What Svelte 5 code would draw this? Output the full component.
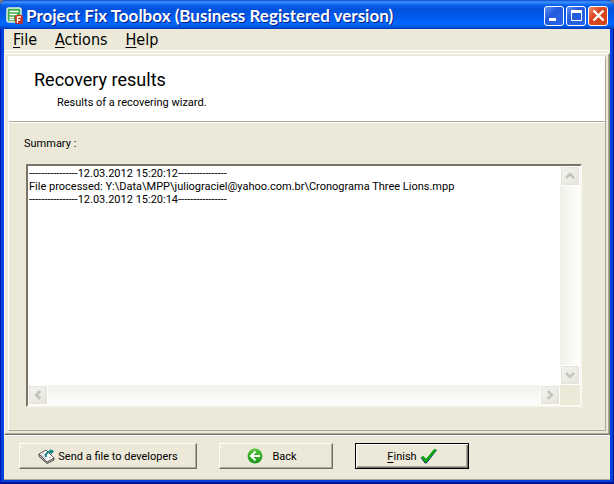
<script>
  const menus = ['File', 'Actions', 'Help'];
  const summary = [
    '----------------12.03.2012 15:20:12----------------',
    'File processed: Y:\\Data\\MPP\\juliograciel@yahoo.com.br\\Cronograma Three Lions.mpp',
    '----------------12.03.2012 15:20:14----------------'
  ].join('\n');
</script>

{#snippet arrow(label, turn)}
  <button class="arrow" type="button" aria-label={label} disabled>
    <svg width="10" height="10" viewBox="0 0 10 10" aria-hidden="true">
      <path d="M1 7.2 L5 3.2 L9 7.2" transform="rotate({turn} 5 5)" fill="none" stroke="#c4c4bd" stroke-width="2.6" />
    </svg>
  </button>
{/snippet}

<div class="desktop">
  <div class="window">
    <header class="titlebar">
      <svg class="app-icon" width="17" height="17" viewBox="0 0 17 17" aria-hidden="true">
        <rect x="1" y="1" width="14" height="14" rx="2" fill="#43ad4c" stroke="#e2f4df" stroke-width="1.5" />
        <path d="M3.5 4.5H12.5M3.5 7.5H11M3.5 10.5H8M3.5 12.5H8" stroke="#fff" stroke-width="1.6" />
        <rect x="9" y="8" width="8" height="9" rx="2" fill="#c52d20" />
        <path d="M11.5 16V10H15M11.5 13H14.5" fill="none" stroke="#fff" stroke-width="1.3" />
      </svg>
      <h1>Project Fix Toolbox (Business Registered version)</h1>
      <div class="controls">
        <button type="button" aria-label="Minimize">
          <svg width="17" height="17" viewBox="0 0 17 17" aria-hidden="true"><path d="M3 12.5H10" stroke="#fff" stroke-width="3" /></svg>
        </button>
        <button type="button" aria-label="Maximize">
          <svg width="17" height="17" viewBox="0 0 17 17" aria-hidden="true"><path d="M3 4.5H14" stroke="#fff" stroke-width="3" /><path d="M3.5 4V13.5H13.5V4" fill="none" stroke="#fff" /></svg>
        </button>
        <button class="close" type="button" aria-label="Close">
          <svg width="17" height="17" viewBox="0 0 17 17" aria-hidden="true"><path d="M3.5 3.5L13.5 13.5M13.5 3.5L3.5 13.5" stroke="#fff" stroke-width="2.4" /></svg>
        </button>
      </div>
    </header>

    <div class="body">
      <nav>
        {#each menus as m}
          <button type="button"><u>{m[0]}</u>{m.slice(1)}</button>
        {/each}
      </nav>

      <main>
        <div class="page">
          <div class="banner">
            <h2>Recovery results</h2>
            <p>Results of a recovering wizard.</p>
          </div>
          <div class="content">
            <label for="summary">Summary :</label>
            <div class="memo">
              <textarea id="summary" readonly wrap="off" value={summary}></textarea>
              <div class="bar vertical">
                {@render arrow('Scroll up', 0)}
                {@render arrow('Scroll down', 180)}
              </div>
              <div class="bar horizontal">
                {@render arrow('Scroll left', -90)}
                {@render arrow('Scroll right', 90)}
              </div>
            </div>
          </div>
        </div>
      </main>

      <footer>
        <button class="send" type="button">
          <svg width="17" height="15" viewBox="0 0 17 15" aria-hidden="true">
            <path d="M1 5L8 1L16 9L9 14Z" fill="#fff" stroke="#555" />
            <path d="M1 5V7.5L9 14.5L16 11V9L9 13Z" fill="#bbb" stroke="#333" stroke-width=".8" />
            <path d="M3 5.5L8 10M5 4L9 8.5M11 9L13 8" stroke="#aaa" />
            <path d="M8 8C7 5 9 3 13 2.5" fill="none" stroke="#087f80" stroke-width="1.8" />
            <path d="M11.5 0L16 2L13 5.5Z" fill="#087f80" />
          </svg>
          <span>Send a file to developers</span>
        </button>
        <button class="back" type="button">
          <svg width="16" height="16" viewBox="0 0 16 16" aria-hidden="true">
            <defs><linearGradient id="green" x1="0" y1="0" x2="0" y2="1"><stop offset="0" stop-color="#58c63f" /><stop offset="1" stop-color="#159615" /></linearGradient></defs>
            <circle cx="8" cy="8" r="7.5" fill="url(#green)" />
            <path d="M8.5 3.5L4 8L8.5 12.5M4.5 8H13" fill="none" stroke="#fff" stroke-width="2" />
          </svg>
          <span>Back</span>
        </button>
        <button class="finish" type="button">
          <span><u>F</u>inish</span>
          <svg width="17" height="16" viewBox="0 0 17 16" aria-hidden="true">
            <path d="M1 9L3.5 8L6 11L14 1.5H16.5L6.5 15H5Z" fill="#0b9a0b" />
            <path d="M1 9.5L5 15H6.5L16.5 2" fill="none" stroke="#10307a" />
            <path d="M2.5 9L6 13L15.5 1.5" fill="none" stroke="#0ca80f" stroke-width="2.2" />
          </svg>
        </button>
      </footer>
    </div>
  </div>
</div>

<style>
  :global(body) { margin: 0; }
  .desktop { background: #77767c; }
  .window {
    box-sizing: border-box;
    display: flex;
    flex-direction: column;
    min-height: 100vh;
    padding: 0 4px 4px;
    border-radius: 7px 7px 0 0;
    background: #0340dc;
    box-shadow: inset 1px 0 #0019b8, inset -1px 0 #00118f, inset 0 -2px #00118f;
    font: 11px/13px Roboto, "Liberation Sans", sans-serif;
    color: #000;
  }
  button { font: inherit; color: inherit; }
  h1, h2, p { margin: 0; font-weight: normal; }
  svg { display: block; flex: none; }

  .titlebar {
    display: flex;
    align-items: center;
    height: 29px;
    margin: 0 -4px;
    padding: 2px 6px 0;
    box-sizing: border-box;
    border-radius: 7px 7px 0 0;
    background: linear-gradient(#0a48cf 0, #3e94ff 2px, #0a62ea 5px, #0052dd 9px, #0059ea 16px, #0068ff 24px, #0052dc 27px, #0038b8 29px);
  }
  h1 {
    flex: 1;
    margin-left: 3px;
    font: bold 17px/24px Lato, "Open Sans", sans-serif;
    color: #fff;
    text-shadow: 1px 1px #0a1f88;
    white-space: nowrap;
  }
  .controls { display: flex; gap: 2px; }
  .controls button {
    width: 20px;
    height: 20px;
    padding: 0;
    display: grid;
    place-items: center;
    border: 1px solid #fff;
    border-radius: 3px;
    background: linear-gradient(135deg, #5f8ff2, #2359dc 40%, #2a67e8);
  }
  .controls .close { background: linear-gradient(135deg, #f09070, #d9461f 40%, #d54418); }

  .body { flex: 1; display: flex; flex-direction: column; background: #ece9d8; border-bottom: 1px solid #aca899; }
  nav { display: flex; gap: 18px; height: 21px; padding: 0 9px; border-bottom: 1px solid #fff; }
  nav button { padding: 0; border: 0; background: none; font: 16px/21px "DejaVu Sans Condensed", "Noto Sans", sans-serif; }
  u { text-decoration-thickness: 1px; text-underline-offset: 2px; }

  main {
    flex: 1;
    display: flex;
    margin-top: 2px;
    padding: 2px 3px 3px;
    border-top: 1px solid #fff;
    border-left: 1px solid #fff;
    border-right: 1px solid #8b887a;
    border-bottom: 1px solid #77746a;
    box-shadow: inset -1px -1px #aca899;
  }
  .page {
    flex: 1;
    display: flex;
    flex-direction: column;
    border: 1px solid #fff;
    border-right-color: #aca899;
    border-bottom-color: #aca899;
  }
  .banner { padding: 12px 25px; background: #fff; border-bottom: 1px solid #aca899; }
  h2 { font-size: 18px; line-height: 22px; }
  .banner p { margin: 5px 0 0 23px; }
  .content { flex: 1; display: flex; flex-direction: column; padding: 14px 23px 23px 17px; border-top: 1px solid #fff; }
  label { margin: 0 -2px 14px; }
  .memo {
    flex: 1;
    display: grid;
    grid-template: 1fr 20px / 1fr 20px;
    border: 2px solid #f8f7f1;
    border-top-color: #77746a;
    border-left-color: #77746a;
  }
  textarea {
    min-width: 0;
    min-height: 0;
    padding: 1px;
    border: 0;
    outline: 0;
    resize: none;
    overflow: hidden;
    background: #fff;
    color: #000;
    font: 11px/13px Roboto, "Liberation Sans", sans-serif;
    white-space: pre;
  }
  .bar { display: flex; justify-content: space-between; }
  .vertical { flex-direction: column; background: linear-gradient(90deg, #f1f0e9, #fefefb); }
  .horizontal { background: linear-gradient(#f1f0e9, #fefefb); }
  .arrow {
    width: 20px;
    height: 20px;
    padding: 0;
    display: grid;
    place-items: center;
    border: 1px solid #fff;
    border-radius: 2px;
    background: linear-gradient(135deg, #f4f3ee, #e6e6dd);
    box-shadow: inset 0 0 0 1px #e5e4da, inset -1px -1px 1px #d4d3c6;
  }

  footer { display: flex; align-items: flex-start; gap: 22px; padding: 7px 15px 10px; border-top: 1px solid #fff; }
  footer button {
    box-sizing: border-box;
    display: flex;
    align-items: center;
    justify-content: center;
    gap: 3px;
    height: 26px;
    padding: 0;
    border: 1px solid #fff;
    border-right-color: #716f64;
    border-bottom-color: #716f64;
    background: #ece9d8;
    box-shadow: inset -1px -1px #aca899;
  }
  .send { width: 178px; }
  .back { width: 114px; padding-right: 8px; gap: 9px; }
  .finish {
    width: 114px;
    border-color: #000;
    box-shadow: inset 1px 1px #fff, inset -1px -1px #716f64, inset -2px -2px #aca899;
  }
</style>
